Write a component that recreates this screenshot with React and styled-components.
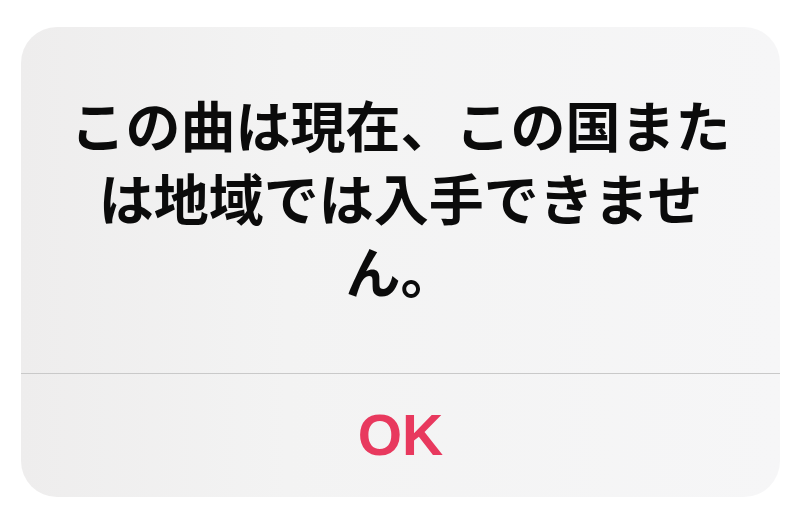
import React from "react";
import styled, { createGlobalStyle } from "styled-components";

const Global = createGlobalStyle`
  html, body {
    margin: 0;
    padding: 0;
    background: #ffffff;
  }
  #root {
    width: 800px;
    height: 525px;
  }
`;

const Page = styled.div`
  box-sizing: border-box;
  width: 800px;
  height: 525px;
  padding: 27px 20px 28px 21px;
  display: flex;
  background: #ffffff;
`;

const Alert = styled.div`
  flex: 1;
  display: flex;
  flex-direction: column;
  border-radius: 36px;
  overflow: hidden;
  background: linear-gradient(90deg, #eeeded 0%, #f3f3f3 35%, #f6f6f7 100%);
`;

const Body = styled.div`
  box-sizing: border-box;
  height: 346px;
  padding: 60px 36px 0 36px;
  display: flex;
  justify-content: center;
`;

const Message = styled.p`
  margin: 0;
  width: 690px;
  text-align: center;
  font-family: "Noto Sans CJK JP", "Noto Sans", sans-serif;
  font-weight: 700;
  font-size: 55px;
  line-height: 73px;
  color: #0b0b0b;
  line-break: strict;
`;

const Separator = styled.div`
  height: 1px;
  background: #c9c9c9;
`;

const Button = styled.button`
  flex: 1;
  border: none;
  background: transparent;
  padding: 0 0 2px 0;
  display: flex;
  align-items: center;
  justify-content: center;
  font-family: "Liberation Sans", Arial, sans-serif;
  font-weight: 700;
  font-size: 57px;
  color: #e8395e;
  cursor: pointer;
`;

export default function App() {
  return (
    <>
      <Global />
      <Page>
        <Alert>
          <Body>
            <Message>この曲は現在、この国または地域では入手できません。</Message>
          </Body>
          <Separator />
          <Button>OK</Button>
        </Alert>
      </Page>
    </>
  );
}
